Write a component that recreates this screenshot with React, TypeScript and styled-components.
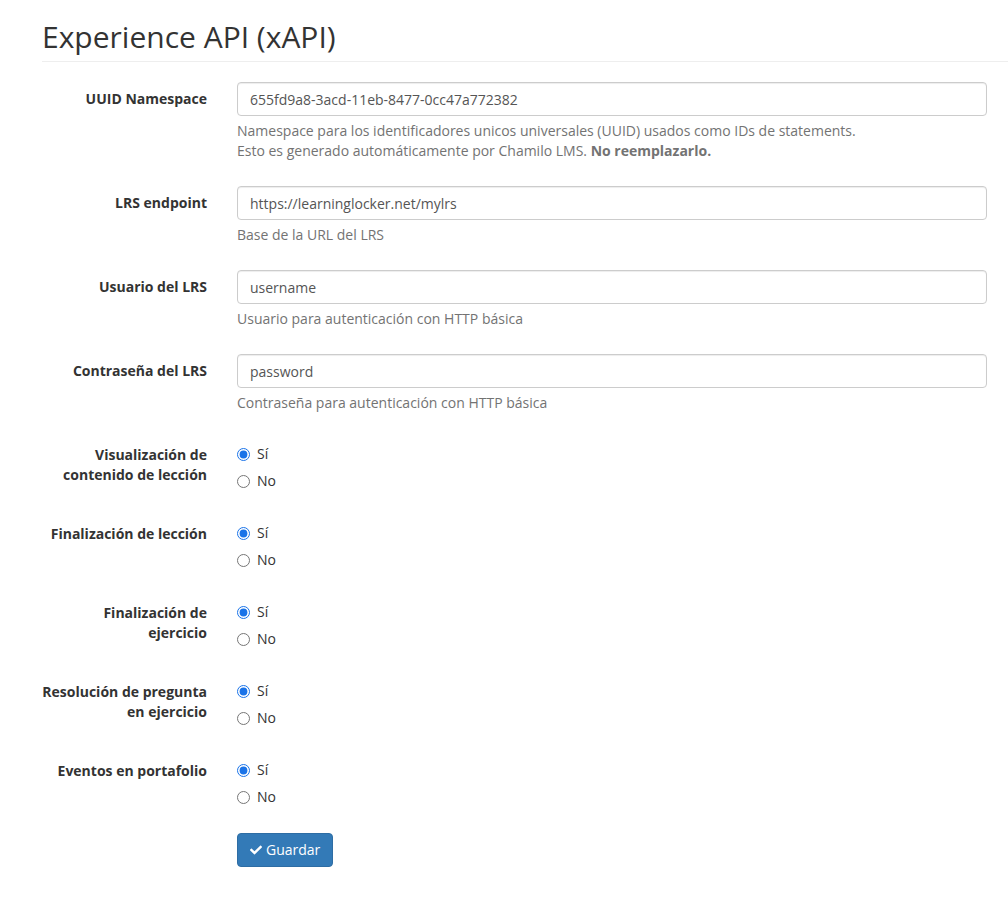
import React from "react";
import styled, { createGlobalStyle } from "styled-components";
import { FaCheck } from "react-icons/fa";

const Global = createGlobalStyle`
  html, body { margin: 0; padding: 0; background: #fff; }
  body {
    font-family: "Open Sans", "Liberation Sans", Arial, sans-serif;
    font-size: 14px;
    line-height: 20px;
    color: #333;
  }
  * { box-sizing: border-box; }
`;

const Page = styled.div`
  padding: 20px 0 40px 42px;
`;

const Header = styled.div`
  border-bottom: 1px solid #eee;
  padding-bottom: 8px;
  margin-bottom: 20px;
`;

const Title = styled.h2`
  margin: 0;
  font-size: 30px;
  font-weight: 400;
  line-height: 33px;
  color: #333;
`;

const Form = styled.form`
  display: flex;
  flex-direction: column;
  width: 945px;
`;

const Group = styled.div<{ $extra?: number }>`
  display: grid;
  grid-template-columns: 165px 750px;
  column-gap: 30px;
  margin-bottom: ${(p) => 15 + (p.$extra ?? 0)}px;
`;

const Label = styled.label`
  text-align: right;
  font-weight: 700;
  padding-top: 7px;
  line-height: 20px;
`;

const Control = styled.div`
  display: flex;
  flex-direction: column;
`;

const Input = styled.input`
  height: 34px;
  width: 100%;
  padding: 6px 12px;
  font-family: inherit;
  font-size: 14px;
  line-height: 20px;
  color: #555;
  background: #fff;
  border: 1px solid #ccc;
  border-radius: 4px;
  box-shadow: inset 0 1px 1px rgba(0, 0, 0, 0.075);
  outline: none;
`;

const Help = styled.span`
  display: block;
  margin: 5px 0 10px;
  color: #737373;
`;

const RadioRow = styled.label`
  display: flex;
  align-items: center;
  padding-top: 6px;
  padding-bottom: 1px;
  height: 27px;
  cursor: pointer;
`;

const RadioInput = styled.input`
  width: 13px;
  height: 13px;
  margin: 0 7px 0 0;
  accent-color: #1a73e8;
`;

const Button = styled.button`
  display: inline-flex;
  align-items: center;
  gap: 4px;
  height: 34px;
  padding: 6px 12px;
  font-family: inherit;
  font-size: 14px;
  line-height: 20px;
  color: #fff;
  background: #337ab7;
  border: 1px solid #2e6da4;
  border-radius: 4px;
  cursor: pointer;
  svg { width: 12px; height: 12px; }
`;

const ButtonCell = styled.div`
  grid-column: 2;
  display: flex;
`;

type TextField = { label: string; value: string; help: React.ReactNode };

const textFields: TextField[] = [
  {
    label: "UUID Namespace",
    value: "655fd9a8-3acd-11eb-8477-0cc47a772382",
    help: (
      <>
        Namespace para los identificadores unicos universales (UUID) usados como IDs de statements.
        <br />
        Esto es generado automáticamente por Chamilo LMS. <b>No reemplazarlo.</b>
      </>
    ),
  },
  { label: "LRS endpoint", value: "https://learninglocker.net/mylrs", help: "Base de la URL del LRS" },
  { label: "Usuario del LRS", value: "username", help: "Usuario para autenticación con HTTP básica" },
  { label: "Contraseña del LRS", value: "password", help: "Contraseña para autenticación con HTTP básica" },
];

const radioFields = [
  "Visualización de contenido de lección",
  "Finalización de lección",
  "Finalización de ejercicio",
  "Resolución de pregunta en ejercicio",
  "Eventos en portafolio",
];

export default function App() {
  return (
    <Page>
      <Global />
      <Header>
        <Title>Experience API (xAPI)</Title>
      </Header>
      <Form onSubmit={(e) => e.preventDefault()}>
        {textFields.map((f) => (
          <Group key={f.label}>
            <Label>{f.label}</Label>
            <Control>
              <Input type="text" defaultValue={f.value} />
              <Help>{f.help}</Help>
            </Control>
          </Group>
        ))}
        {radioFields.map((name, i) => (
          <Group key={name} $extra={10}>
            <Label>{name}</Label>
            <Control>
              <RadioRow>
                <RadioInput type="radio" name={`r${i}`} defaultChecked />
                Sí
              </RadioRow>
              <RadioRow>
                <RadioInput type="radio" name={`r${i}`} />
                No
              </RadioRow>
            </Control>
          </Group>
        ))}
        <Group>
          <ButtonCell>
            <Button type="submit">
              <FaCheck />
              Guardar
            </Button>
          </ButtonCell>
        </Group>
      </Form>
    </Page>
  );
}
